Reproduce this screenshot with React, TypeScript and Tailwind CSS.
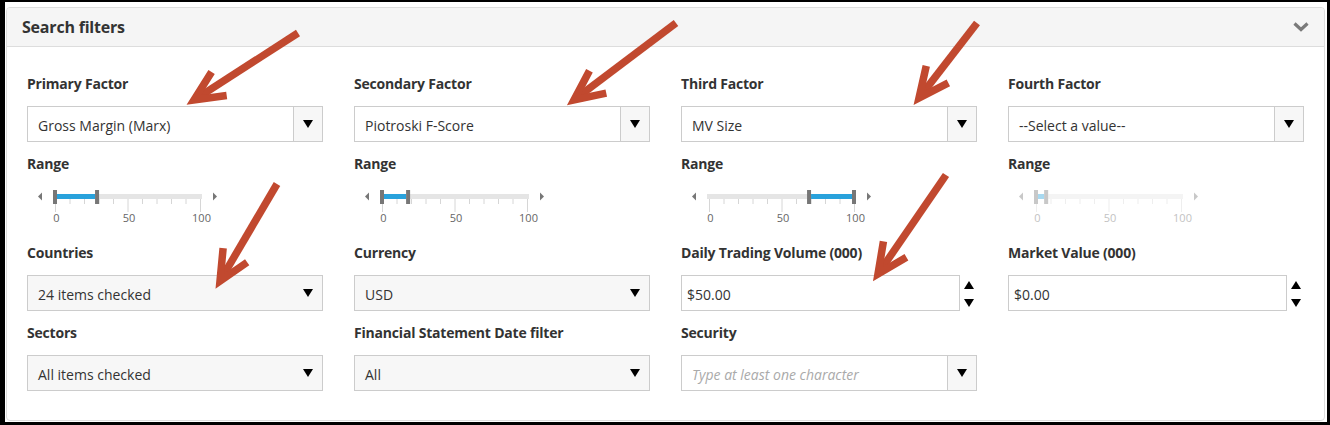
import React from "react";

const Tri = ({ up }: { up?: boolean }) => (
  <svg width="10" height="8" viewBox="0 0 10 8" className="block">
    <polygon points={up ? "5,0 10,8 0,8" : "0,0 10,0 5,8"} fill="#000" />
  </svg>
);

const Label = ({ children }: { children: React.ReactNode }) => (
  <div className="h-[20px] leading-[20px] text-[14px] font-bold text-[#333] whitespace-nowrap tracking-[-0.2px]">{children}</div>
);

const FactorSelect = ({ value, placeholder }: { value: string; placeholder?: boolean }) => (
  <div className="mt-[12px] flex h-[36px] w-[296px] border border-[#ccc] bg-white">
    <div
      className={
        "flex-1 flex items-center pl-[10px] pt-[2px] text-[14px] whitespace-nowrap " +
        (placeholder ? "italic text-[#aaa]" : "text-[#333]")
      }
    >
      {value}
    </div>
    <div className="w-[29px] border-l border-[#ccc] bg-[#f7f7f7] flex items-center justify-center">
      <Tri />
    </div>
  </div>
);

const DropSelect = ({ value }: { value: string }) => (
  <div className="mt-[12px] flex items-center justify-between h-[36px] w-[296px] border border-[#ccc] bg-[#f7f7f7] pl-[10px] pr-[9px]">
    <span className="pt-[2px] text-[14px] text-[#333] whitespace-nowrap">{value}</span>
    <Tri />
  </div>
);

const NumInput = ({ value }: { value: string }) => (
  <div className="mt-[12px] flex h-[36px]">
    <div className="w-[279px] h-full border border-[#ccc] bg-white flex items-center pl-[5px] pt-[2px] text-[14px] text-[#333]">
      {value}
    </div>
    <div className="w-[17px] flex flex-col items-center justify-between pl-[1px] pt-[6px] pb-[4px]">
      <Tri up />
      <Tri />
    </div>
  </div>
);

const Slider = ({ lo, hi, disabled }: { lo: number; hi: number; disabled?: boolean }) => {
  const x = (v: number) => 28 + v * 1.45;
  const ticks = Array.from({ length: 11 }, (_, i) => i * 10);
  return (
    <div className={"mt-[12px] h-[45px] " + (disabled ? "opacity-40" : "")}>
      <svg width="200" height="45" viewBox="0 0 200 45" className="block">
        <polygon points="11,10.5 15,6.5 15,14.5" fill="#777" />
        <polygon points="186,6.5 190,10.5 186,14.5" fill="#777" />
        <rect x="26" y="8" width="149" height="5" fill="#e5e5e5" />
        {ticks.map((v) => (
          <line
            key={v}
            x1={x(v) + 0.5}
            x2={x(v) + 0.5}
            y1="13"
            y2={v % 50 === 0 ? 26 : 18}
            stroke="#d6d6d6"
            strokeWidth="1"
          />
        ))}
        {[0, 50, 100].map((v) => (
          <text
            key={v}
            x={x(v) + 1.5}
            y="36"
            fontSize="11"
            textAnchor="middle"
            fill="#666"
            fontFamily="'Open Sans', sans-serif"
          >
            {v}
          </text>
        ))}
        <rect x={x(lo) + 2} y="8" width={x(hi) - x(lo) - 4} height="5" fill="#29a2dc" />
        <rect x={x(lo) - 2} y="4" width="4" height="14" fill="#777" />
        <rect x={x(hi) - 2} y="4" width="4" height="14" fill="#777" />
      </svg>
    </div>
  );
};

const arrows: [number, number, number, number][] = [
  [298, 33, 194, 100],
  [676, 23, 574, 100],
  [977, 23, 919, 98],
  [277, 184, 220, 281],
  [946, 175, 878, 274],
];

const Arrow = ({ s }: { s: [number, number, number, number] }) => {
  const [sx, sy, tx, ty] = s;
  const dx = sx - tx;
  const dy = sy - ty;
  const len = Math.hypot(dx, dy);
  const ux = dx / len;
  const uy = dy / len;
  const L = 33;
  const a = (25 * Math.PI) / 180;
  const rot = (ang: number) => [ux * Math.cos(ang) - uy * Math.sin(ang), ux * Math.sin(ang) + uy * Math.cos(ang)];
  const [w1x, w1y] = rot(a);
  const [w2x, w2y] = rot(-a);
  return (
    <g stroke="#c1492f" strokeWidth="7.5" fill="none">
      <line x1={sx} y1={sy} x2={tx + ux * 4} y2={ty + uy * 4} strokeLinecap="butt" />
      <polyline
        points={`${tx + w1x * L},${ty + w1y * L} ${tx},${ty} ${tx + w2x * L},${ty + w2y * L}`}
        strokeLinejoin="miter"
        strokeMiterlimit="10"
        strokeLinecap="butt"
      />
    </g>
  );
};

export default function App() {
  return (
    <div className="relative w-[1330px] h-[425px] bg-black pl-[5px] pt-[2px] pr-[3px] pb-[3px] font-['Open_Sans',sans-serif]">
      <div className="h-full bg-white pl-[1px] pt-[5px] pr-[2px] pb-[1px]">
        <div className="h-full rounded-[4px] border border-[#ddd] overflow-hidden bg-white">
          <div className="h-[39px] bg-[#f5f5f5] border-b border-[#ddd] flex items-center justify-between pl-[15px] pr-[15px]">
            <span className="text-[16px] font-bold text-[#333] tracking-[-0.2px]">Search filters</span>
            <svg width="16" height="10" viewBox="0 0 16 10" className="block">
              <polyline points="1.5,1.5 8,7.5 14.5,1.5" fill="none" stroke="#7a7a7a" strokeWidth="3.2" />
            </svg>
          </div>
          <div className="pl-[20px] pt-[27px]">
            <div className="grid grid-cols-[296px_296px_296px_296px] gap-x-[31px] gap-y-[12px]">
              <div className="flex flex-col">
                <Label>Primary Factor</Label>
                <FactorSelect value="Gross Margin (Marx)" />
              </div>
              <div className="flex flex-col">
                <Label>Secondary Factor</Label>
                <FactorSelect value="Piotroski F-Score" />
              </div>
              <div className="flex flex-col">
                <Label>Third Factor</Label>
                <FactorSelect value="MV Size" />
              </div>
              <div className="flex flex-col">
                <Label>Fourth Factor</Label>
                <FactorSelect value="--Select a value--" />
              </div>

              <div className="flex flex-col">
                <Label>Range</Label>
                <Slider lo={0} hi={29} />
              </div>
              <div className="flex flex-col">
                <Label>Range</Label>
                <Slider lo={0} hi={18} />
              </div>
              <div className="flex flex-col">
                <Label>Range</Label>
                <Slider lo={69} hi={100} />
              </div>
              <div className="flex flex-col">
                <Label>Range</Label>
                <Slider lo={0} hi={7} disabled />
              </div>

              <div className="flex flex-col">
                <Label>Countries</Label>
                <DropSelect value="24 items checked" />
              </div>
              <div className="flex flex-col">
                <Label>Currency</Label>
                <DropSelect value="USD" />
              </div>
              <div className="flex flex-col">
                <Label>Daily Trading Volume (000)</Label>
                <NumInput value="$50.00" />
              </div>
              <div className="flex flex-col">
                <Label>Market Value (000)</Label>
                <NumInput value="$0.00" />
              </div>

              <div className="flex flex-col">
                <Label>Sectors</Label>
                <DropSelect value="All items checked" />
              </div>
              <div className="flex flex-col">
                <Label>Financial Statement Date filter</Label>
                <DropSelect value="All" />
              </div>
              <div className="flex flex-col">
                <Label>Security</Label>
                <FactorSelect value="Type at least one character" placeholder />
              </div>
              <div />
            </div>
          </div>
        </div>
      </div>
      <svg
        width="1330"
        height="425"
        viewBox="0 0 1330 425"
        className="absolute left-0 top-0 pointer-events-none"
      >
        {arrows.map((s, i) => (
          <Arrow key={i} s={s} />
        ))}
      </svg>
    </div>
  );
}
